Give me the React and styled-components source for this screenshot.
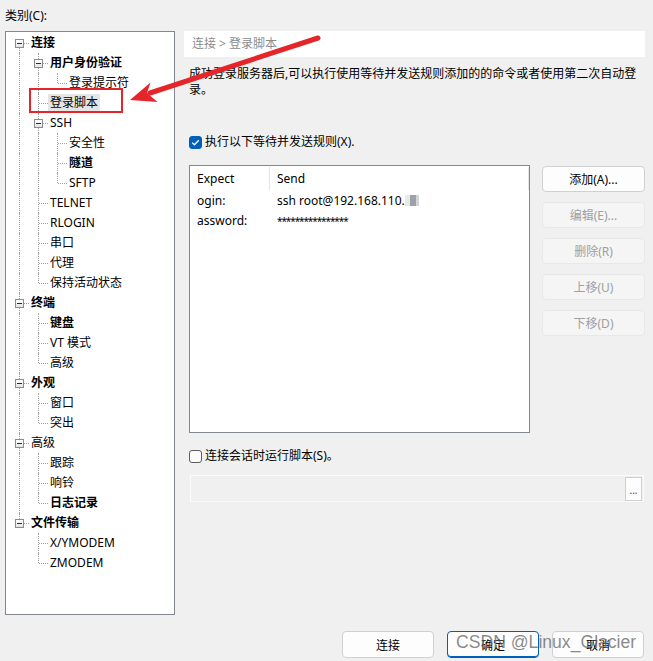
import React from 'react'
import styled, { createGlobalStyle } from 'styled-components'

const GlobalStyle = createGlobalStyle`
    html, body {
        margin: 0;
        padding: 0;
        background: #f0f0f0;
    }

    body {
        font-family: "Noto Sans", "Noto Sans CJK SC", sans-serif;
        font-size: 12px;
        color: #000;
    }

    * {
        box-sizing: border-box;
    }
`;

const Page = styled.div`
    position: relative;
    width: 653px;
    height: 661px;
    padding: 8px 8px 0 5px;
    display: flex;
    flex-direction: column;
`;

const Caption = styled.div`
    line-height: 16px;
    margin-bottom: 7px;
`;

const Body = styled.div`
    display: flex;
    gap: 9px;
`;

/* ---------- tree ---------- */

const TreeBox = styled.div`
    width: 170px;
    height: 584px;
    flex: none;
    background: #fff;
    border: 1px solid #828790;
    padding: 1px 0 0 4px;
`;

const Row = styled.div`
    display: flex;
    align-items: center;
    height: 20px;
`;

const Guide = styled.span`
    position: relative;
    flex: none;
    width: 19px;
    height: 100%;

    &::before {
        content: '';
        display: ${p => (p.$on ? 'block' : 'none')};
        position: absolute;
        left: 9px;
        top: 0;
        bottom: 0;
        border-left: 1px dotted #a0a0a0;
    }
`;

const Branch = styled.span`
    position: relative;
    flex: none;
    width: 19px;
    height: 100%;
    display: flex;
    align-items: center;
    justify-content: center;

    &::before {
        content: '';
        position: absolute;
        left: 9px;
        top: ${p => (p.$top ? '0' : '10px')};
        bottom: ${p => (p.$bottom ? '0' : '10px')};
        border-left: 1px dotted #a0a0a0;
    }

    &::after {
        content: '';
        position: absolute;
        left: 10px;
        right: 0;
        top: 10px;
        border-top: 1px dotted #a0a0a0;
    }
`;

const Expander = styled.span`
    position: relative;
    z-index: 1;
    width: 9px;
    height: 9px;
    border: 1px solid #8c8c8c;
    background: linear-gradient(#ffffff, #e4e4e4);

    &::after {
        content: '';
        position: absolute;
        left: 1px;
        top: 3px;
        width: 5px;
        height: 1px;
        background: #2b2b2b;
    }
`;

const Label = styled.span`
    padding: 1px 2px;
    line-height: 16px;
    white-space: nowrap;
    font-weight: ${p => (p.$bold ? 700 : 400)};
    background: ${p => (p.$selected ? '#e5e5e5' : 'transparent')};
`;

/* ---------- right side ---------- */

const Panel = styled.section`
    flex: 1;
    padding-left: 5px;
    display: flex;
    flex-direction: column;
`;

const Crumb = styled.div`
    height: 26px;
    margin-left: -5px;
    padding-left: 8px;
    background: #fff;
    color: #8c8c8c;
    line-height: 26px;
`;

const Info = styled.p`
    margin: 9px 0 0;
    width: 452px;
    line-height: 16px;
`;

const CheckRow = styled.label`
    display: flex;
    align-items: center;
    gap: 3px;
    height: 16px;
    margin-top: ${p => p.$gap}px;
    line-height: 16px;
`;

const Box = styled.span`
    width: 13px;
    height: 13px;
    flex: none;
    border-radius: 3px;
    display: flex;
    align-items: center;
    justify-content: center;
    background: ${p => (p.$checked ? '#005fb8' : '#fbfbfb')};
    border: 1px solid ${p => (p.$checked ? '#005fb8' : '#5c5c5c')};
`;

const RuleArea = styled.div`
    display: flex;
    gap: 12px;
    margin-top: 15px;
`;

const Table = styled.div`
    width: 341px;
    height: 268px;
    flex: none;
    background: #fff;
    border: 1px solid #828790;
`;

const Grid = styled.div`
    display: grid;
    grid-template-columns: 80px 259px;
    height: ${p => (p.$head ? 25 : 20)}px;
    align-items: center;
`;

const Cell = styled.span`
    padding-left: 7px;
    line-height: ${p => (p.$head ? '23px' : '16px')};
    white-space: nowrap;
    border-right: ${p => (p.$head ? '1px solid #e5e5e5' : 'none')};
`;

const Masked = styled.span`
    font-size: 10px;
    letter-spacing: -1.1px;
`;

const Mosaic = styled.span`
    display: inline-block;
    width: 14px;
    height: 11px;
    vertical-align: -1px;
    background: linear-gradient(to right, #e3ece4 0 35%, #9ca2ab 35% 75%, #d2d6db 75%);
`;

const Side = styled.div`
    display: flex;
    flex-direction: column;
    gap: 10px;
    padding-top: 1px;
`;

const Button = styled.button`
    font: inherit;
    width: ${p => p.$w}px;
    height: ${p => p.$h}px;
    padding: 0;
    border-radius: 4px;
    background: ${p => (p.$disabled ? '#f5f5f5' : '#fdfdfd')};
    color: ${p => (p.$disabled ? '#a0a0a0' : '#000')};
    border: 1px solid ${p => (p.$primary ? '#005fb8' : p.$disabled ? '#e8e8e8' : '#d0d0d0')};
    box-shadow: ${p => (p.$primary ? 'inset 0 -1px 0 #005fb8' : 'none')};
`;

const ScriptField = styled.div`
    display: flex;
    justify-content: flex-end;
    align-items: center;
    width: 454px;
    height: 27px;
    margin: 11px 0 0 1px;
    padding-right: 1px;
    border: 1px solid #fbfbfb;
    background: #f0f0f0;
`;

const Dots = styled.span`
    width: 17px;
    height: 24px;
    background: #fdfdfd;
    border: 1px solid #cfcfcf;
    font-size: 10px;
    line-height: 24px;
    text-align: center;
    color: #444;
`;

const Footer = styled.div`
    display: flex;
    justify-content: flex-end;
    gap: 13px;
    margin-top: 16px;
    padding-right: 1px;
`;

const Annotation = styled.svg`
    position: absolute;
    left: 0;
    top: 0;
    pointer-events: none;
`;

const Watermark = styled.span`
    position: absolute;
    left: 456px;
    top: 632px;
    font-family: "Liberation Sans", Arial, sans-serif;
    font-size: 17.6px;
    line-height: 20px;
    color: rgba(105, 105, 105, 0.78);
    pointer-events: none;
`;

const tree = [
    { label: '连接', bold: true, children: [
        { label: '用户身份验证', bold: true, children: [{ label: '登录提示符' }] },
        { label: '登录脚本', selected: true },
        { label: 'SSH', children: [{ label: '安全性' }, { label: '隧道', bold: true }, { label: 'SFTP' }] },
        { label: 'TELNET' },
        { label: 'RLOGIN' },
        { label: '串口' },
        { label: '代理' },
        { label: '保持活动状态' },
    ] },
    { label: '终端', bold: true, children: [{ label: '键盘', bold: true }, { label: 'VT 模式' }, { label: '高级' }] },
    { label: '外观', bold: true, children: [{ label: '窗口' }, { label: '突出' }] },
    { label: '高级', children: [{ label: '跟踪' }, { label: '响铃' }, { label: '日志记录', bold: true }] },
    { label: '文件传输', bold: true, children: [{ label: 'X/YMODEM' }, { label: 'ZMODEM' }] },
];

function flatten(nodes, guides = [], out = []) {
    nodes.forEach((n, i) => {
        const last = i === nodes.length - 1;
        out.push({ ...n, guides, last, first: guides.length === 0 && i === 0 });
        if (n.children) flatten(n.children, [...guides, !last], out);
    });
    return out;
}

const rows = flatten(tree);

const rules = [
    { expect: 'ogin:', send: 'ssh root@192.168.110.', hidden: true },
    { expect: 'assword:', send: '****************', masked: true },
];

const sideButtons = [
    { text: '添加(A)...', disabled: false },
    { text: '编辑(E)...', disabled: true },
    { text: '删除(R)', disabled: true },
    { text: '上移(U)', disabled: true },
    { text: '下移(D)', disabled: true },
];

const Check = () => (
    <svg width="9" height="9" viewBox="0 0 9 9">
        <polyline points="1.2,4.6 3.4,6.8 7.8,2.2" fill="none" stroke="#fff" strokeWidth="1.3" />
    </svg>
);

export default () => {
    return (
        <>
        <GlobalStyle />
        <Page>
            <Caption>类别(C):</Caption>
            <Body>
                <TreeBox>
                    {rows.map((r, i) => (
                        <Row key={i}>
                            {r.guides.map((g, j) => <Guide key={j} $on={g} />)}
                            <Branch $top={!r.first} $bottom={!r.last}>
                                {r.children && <Expander />}
                            </Branch>
                            <Label $bold={r.bold} $selected={r.selected}>{r.label}</Label>
                        </Row>
                    ))}
                </TreeBox>

                <Panel>
                    <Crumb>连接 &gt; 登录脚本</Crumb>
                    <Info>成功登录服务器后,可以执行使用等待并发送规则添加的的命令或者使用第二次自动登录。</Info>

                    <CheckRow $gap={36}>
                        <Box $checked><Check /></Box>
                        执行以下等待并发送规则(X).
                    </CheckRow>

                    <RuleArea>
                        <Table>
                            <Grid $head>
                                <Cell $head>Expect</Cell>
                                <Cell $head>Send</Cell>
                            </Grid>
                            {rules.map((r, i) => (
                                <Grid key={i}>
                                    <Cell>{r.expect}</Cell>
                                    <Cell>
                                        {r.masked ? <Masked>{r.send}</Masked> : r.send}
                                        {r.hidden && <Mosaic />}
                                    </Cell>
                                </Grid>
                            ))}
                        </Table>
                        <Side>
                            {sideButtons.map(b => (
                                <Button key={b.text} $w={103} $h={26} $disabled={b.disabled}>{b.text}</Button>
                            ))}
                        </Side>
                    </RuleArea>

                    <CheckRow $gap={15}>
                        <Box />
                        连接会话时运行脚本(S)。
                    </CheckRow>

                    <ScriptField>
                        <Dots>...</Dots>
                    </ScriptField>
                </Panel>
            </Body>

            <Footer>
                <Button $w={92} $h={27}>连接</Button>
                <Button $w={92} $h={27} $primary>确定</Button>
                <Button $w={92} $h={27}>取消</Button>
            </Footer>

            <Annotation width="653" height="661" viewBox="0 0 653 661">
                <rect x="30" y="89" width="92" height="23" fill="none" stroke="#e4262b" strokeWidth="2" />
                <line x1="318" y1="38" x2="150" y2="93" stroke="#e4262b" strokeWidth="5" strokeLinecap="round" />
                <polygon points="130,100 150.5,82.5 147,93 157.5,102" fill="#e4262b" />
            </Annotation>
            <Watermark>CSDN @Linux_Glacier</Watermark>
        </Page>
        </>
    )
}
